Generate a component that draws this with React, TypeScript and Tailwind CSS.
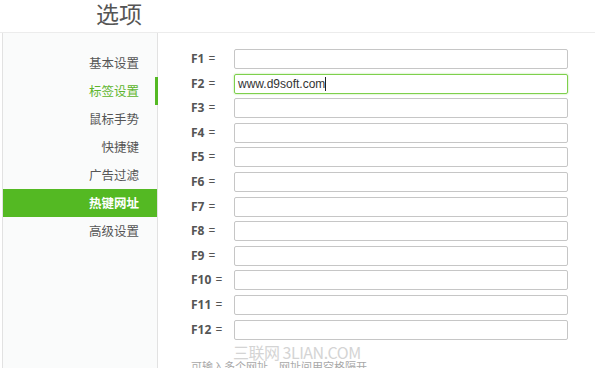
import React from 'react';

const menu = ['基本设置', '标签设置', '鼠标手势', '快捷键', '广告过滤', '热键网址', '高级设置'];
const keys = ['F1', 'F2', 'F3', 'F4', 'F5', 'F6', 'F7', 'F8', 'F9', 'F10', 'F11', 'F12'];

const cjk = { fontFamily: '"Microsoft YaHei", "Noto Sans CJK SC", sans-serif' };

export default function App() {
  return (
    <div className="w-[595px] h-[368px] overflow-hidden bg-white text-[#555]" style={cjk}>
      {/* Header */}
      <div className="h-[33px] border-b border-[#ececec] pl-[96px]">
        <h1 className="text-[23px] leading-[27px] text-[#555] font-normal">选项</h1>
      </div>

      <div className="flex h-[335px]">
        {/* Sidebar */}
        <div className="ml-[2px] w-[156px] border-l border-r border-[#e2e2e2] bg-[#fafbfb] pt-[16px]">
          {menu.map((item) => {
            const tab = item === '标签设置';
            const active = item === '热键网址';
            return (
              <div
                key={item}
                className={`relative h-[28px] flex items-center justify-end pr-[18px] text-[12.5px] ${
                  active ? 'bg-[#54b923] text-white font-bold' : tab ? 'text-[#5db52c]' : 'text-[#555]'
                }`}
              >
                {item}
                {tab && <span className="absolute right-[-1px] top-0 h-full w-[3px] bg-[#54b923]" />}
              </div>
            );
          })}
        </div>

        {/* Hotkey form */}
        <div className="flex-1 pl-[33px] pt-[16px]">
          <div className="flex flex-col gap-[4.6px]">
            {keys.map((k) => (
              <div key={k} className="flex items-center h-[20px]">
                <span
                  className="w-[43px] text-[12px] font-bold text-[#555]"
                  style={{ fontFamily: '"Open Sans", "Noto Sans", sans-serif' }}
                >
                  {k} <span className="font-normal ml-[1px]">=</span>
                </span>
                <div
                  className={`w-[334px] h-[20px] rounded-[2px] border flex items-center px-[3px] text-[12px] text-[#333] ${
                    k === 'F2' ? 'border-[#7ed04c] shadow-[0_0_2px_#a9e184]' : 'border-[#c6c6c6]'
                  }`}
                  style={{ fontFamily: '"Liberation Sans", Arial, sans-serif' }}
                >
                  {k === 'F2' && (
                    <>
                      www.d9soft.com
                      <span className="inline-block w-[1px] h-[14px] bg-[#222]" />
                    </>
                  )}
                </div>
              </div>
            ))}
          </div>

          <div className="relative mt-[2px] h-[28px]">
            <div className="absolute left-[42px] top-0 text-[16px] leading-[20px] text-[#d4d4d4] tracking-[-0.5px]">
              三联网 3LIAN.COM
            </div>
            <div className="absolute left-0 top-[16px] text-[11px] leading-[16px] text-[#a8a8a8]">
              可输入多个网址，网址间用空格隔开
            </div>
          </div>
        </div>
      </div>
    </div>
  );
}
